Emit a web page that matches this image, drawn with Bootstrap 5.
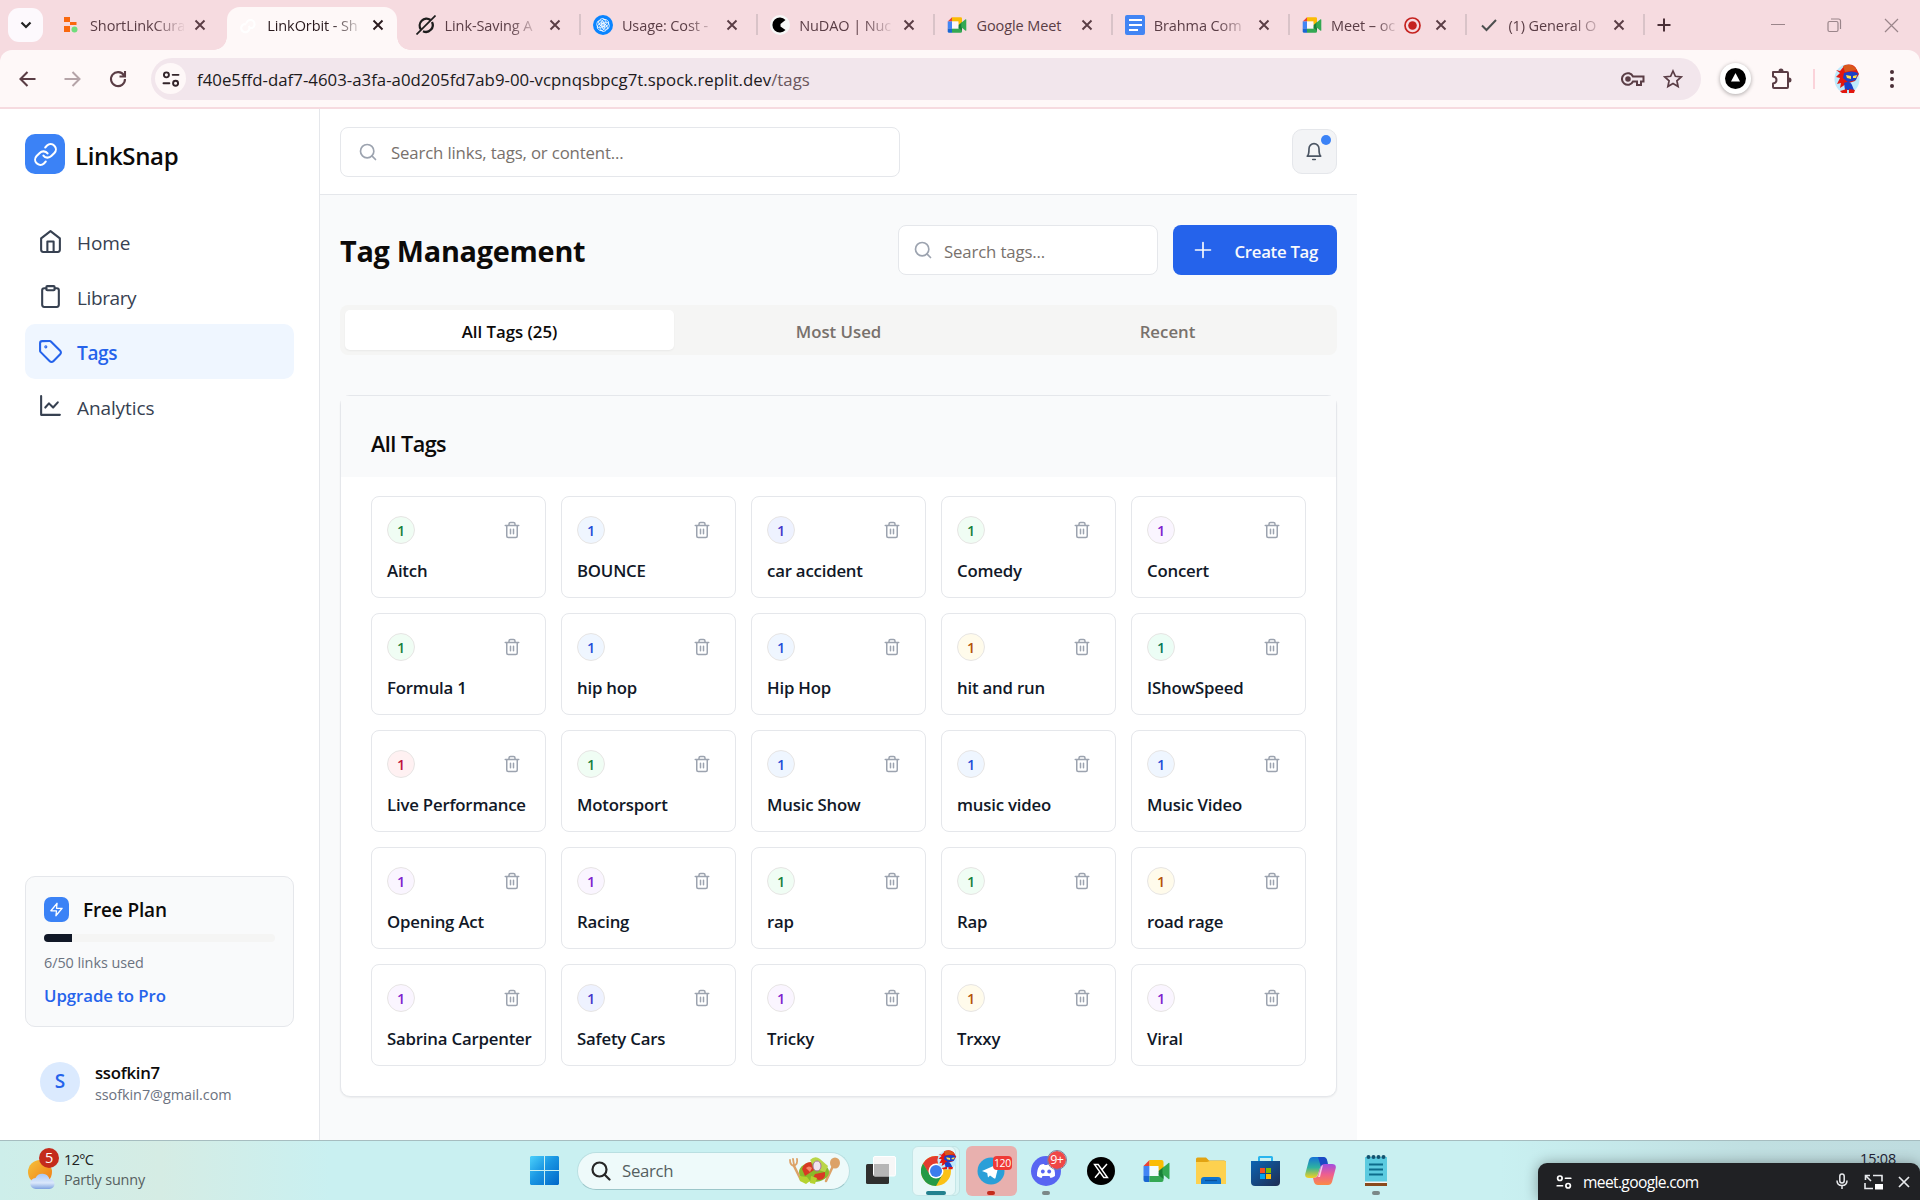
<!DOCTYPE html>
<html lang="en">
<head>
<meta charset="utf-8">
<meta name="viewport" content="width=device-width, initial-scale=1">
<title>LinkOrbit - Tags</title>
<link href="https://cdn.jsdelivr.net/npm/bootstrap@5.3.0/dist/css/bootstrap.min.css" rel="stylesheet">
<style>
:root{--ui:"Open Sans","Noto Sans",sans-serif;--line:#e5e7eb;--blue:#2563eb;--md:550}
html,body{height:1200px;overflow:hidden}
body{font-family:var(--ui);font-size:16.8px;line-height:25px;letter-spacing:-.15px;color:#0c0a09;background:#fff;display:flex;flex-direction:column}
svg{display:block;flex:none}
.ico{fill:none;stroke:currentColor;stroke-width:2;stroke-linecap:round;stroke-linejoin:round}
/* browser chrome */
.tabstrip{height:50px;background:#f6dbe0;color:#5a3d45;font-size:14.5px;padding-left:8px;flex:none;letter-spacing:-.1px}
.tabmenu{width:35px;height:34px;border-radius:11px;background:#fdf9fd;color:#222}
.btab{width:177.3px;height:50px;padding:0 17px 0 14px;position:relative}
.btab .favi{width:20px;height:20px;margin-right:9px}
.btab .ttl{flex:1;min-width:0;line-height:24px;padding-top:1px;-webkit-mask-image:linear-gradient(90deg,#000 68%,transparent 102%);mask-image:linear-gradient(90deg,#000 68%,transparent 102%)}
.btab .ttl.full{-webkit-mask-image:none;mask-image:none}
.btab .cls{margin-left:9px}
.btab.sep::after{content:"";position:absolute;right:-2px;top:14px;width:2px;height:21px;background:#d9c3c8}
.btab.on{color:#2a1a1e}
.btab.on::before{content:"";position:absolute;left:3px;right:5px;top:7px;bottom:0;background:#fef8f8;border-radius:13px 13px 0 0}
.btab.on>*{position:relative}
.flare{position:absolute!important;bottom:0;width:13px;height:13px}
.flare.l{left:-10px;background:radial-gradient(circle at 0 0,transparent 12.5px,#fef8f8 13px)}
.flare.r{right:-8px;background:radial-gradient(circle at 100% 0,transparent 12.5px,#fef8f8 13px)}
.toolbar{height:59px;background:#f6dbe0;flex:none}
.toolbar-in{height:57px;background:#fef8f8;border-radius:12px 12px 0 0;color:#5a3d45;padding-left:15px}
.omni{width:1550px;height:42px;border-radius:21px;background:#f2e6ec;padding:0 18px 0 4px}
.siteinfo{width:31px;height:31px;border-radius:50%;background:#fef8f8;color:#33242a}
.url{color:#201a1c;font-size:16.8px;letter-spacing:.02px;padding-top:1px}
.extdot{width:31px;height:31px;border-radius:50%;background:#fff;box-shadow:0 1px 4px #0005}
/* application */
.app{height:1031px;flex:none}
.side{width:320px;border-right:1px solid var(--line);padding:25px 25px 0}
.logo-sq{width:40px;height:40px;border-radius:10px;background:#3b82f6;color:#fff}
.brand{font-size:24px;font-weight:var(--md);line-height:32px;letter-spacing:-.35px}
.snav{margin-top:40px}
.snav a{height:55px;padding:0 15px 0 13px;border-radius:10px;color:#374151;font-size:19px;text-decoration:none;gap:14px;letter-spacing:-.1px}
.snav a.active{background:#eff6ff;color:var(--blue);font-weight:var(--md)}
.snav a span{padding-top:3px}
.snav a svg{margin-top:-1px}
.plan{height:151px;border:1px solid var(--line);border-radius:10px;background:#f9fafb;padding:20px 18px 0;margin-top:auto}
.bolt{width:25px;height:25px;border-radius:7px;background:#3b82f6;color:#fff}
.pbar{height:8px;border-radius:5px;background:#f5f5f4;margin-top:12px}
.pbar .progress-bar{background:#111827}
.mut{color:#6b7280;font-size:14.4px;letter-spacing:-.05px}
.avatar{width:40px;height:40px;border-radius:50%;background:#dbeafe;color:var(--blue);font-weight:var(--md);font-size:19px}
.mainc{width:1037px;background:#f9fafb}
.topb{height:86px;background:#fff;border-bottom:1px solid var(--line);padding:0 20px}
.fld{height:50px;border:1px solid var(--line);border-radius:8px;background:#fff;color:#78716c}
.fld span{padding-top:2px}
.fld svg{color:#9ca3af}
.bell{width:45px;height:45px;border:1px solid var(--line);border-radius:10px;background:#f3f4f6;color:#4b5563;position:relative}
.bell i{position:absolute;right:5px;top:5px;width:10px;height:10px;border-radius:50%;background:#3b82f6}
h1.ttl1{font-size:28.8px;font-weight:700;margin:0;line-height:40px;padding-top:1px;letter-spacing:-.24px}
.mk{width:164px;height:50px;border-radius:8px;background:var(--blue);color:#f8fafc;font-weight:var(--md);border:0;padding:3px 19px 0 20px;font-size:16.8px;letter-spacing:-.3px}
.tabs{height:50px;background:#f5f5f4;border-radius:8px;padding:5px;color:#78716c;font-weight:var(--md);margin-top:30px;letter-spacing:0}
.tabs div{border-radius:5px;padding-top:2px}
.tabs .cur{background:#fff;color:#0c0a09;box-shadow:0 1px 2px #0000000d}
.panel{width:997px;height:702px;margin:40px 0 0;background:#fff;border:1px solid var(--line);border-radius:10px;box-shadow:0 1px 2px #0000000f}
.panel-h{height:81px;background:#f9fafb;padding:35px 30px 0;font-size:21.6px;font-weight:var(--md);letter-spacing:-.5px}
.grid5{display:grid;grid-template-columns:repeat(5,175px);gap:15px;padding:19px 0 0 30px}
.tagc{height:102px;border:1px solid var(--line);border-radius:8px;padding:19px 15px 0;color:#111827;font-weight:var(--md);background:#fff}
.cnt{width:28px;height:28px;border-radius:50%;border:1px solid #e7e5e4;font-size:14.4px;font-weight:var(--md);padding-top:1px}
.tagc svg{color:#9ca3af;margin-right:9px}
.tagn{margin-top:14px;line-height:25px;width:150px;letter-spacing:-.2px}
.c-g{background:#f0fdf4;color:#15803d}.c-b{background:#eff6ff;color:#1d4ed8}.c-i{background:#eef2ff;color:#4338ca}
.c-p{background:#faf5ff;color:#7e22ce}.c-y{background:#fffbeb;color:#b45309}.c-e{background:#ecfdf5;color:#047857}
.c-r{background:#fff1f2;color:#be123c}
/* desktop taskbar */
.tbar{height:60px;flex:none;border-top:1px solid #a6bdc0;background:linear-gradient(90deg,#cdeeea 0,#d5ece4 160px,#c9f0f1 330px,#c9f0f1 1500px,#c0dfe1 1750px,#bfdcdf);position:relative}
.tsearch{width:273px;height:38px;border-radius:19px;background:#eefafa;border:1px solid #b9dfe1;border-bottom-color:#9cc6c9;color:#555f60;font-size:16.8px;letter-spacing:-.3px;padding:0 8px 0 13px}
.slot{width:54.9px;height:50px;position:relative}
.slot .tile{position:absolute;inset:0 2px;border-radius:6px}
.slot>svg{position:relative}
.slot .run{position:absolute;bottom:1px;height:4px;width:8px;border-radius:2px;background:#7b8888}
.bdg{position:absolute;color:#fff;text-align:center}
.pip{position:absolute;right:0;bottom:0;width:382px;height:37px;background:#202124;color:#fff;border-radius:9px 9px 0 0;padding:0 9px 0 17px;font-size:15.6px;letter-spacing:-.65px;box-shadow:0 0 14px #0005}
</style>
</head>
<body>
<svg width="0" height="0" style="display:none">
<symbol id="x" viewBox="0 0 14 14"><path d="M2.5 2.5l9 9M11.5 2.5l-9 9" fill="none" stroke="currentColor" stroke-width="1.9"/></symbol>
<symbol id="lens" viewBox="0 0 24 24"><circle cx="11" cy="11" r="8"/><path d="m21 21-4.3-4.3"/></symbol>
<symbol id="trash" viewBox="0 0 24 24"><path d="M3 6h18M19 6v14c0 1-1 2-2 2H7c-1 0-2-1-2-2V6M8 6V4c0-1 1-2 2-2h4c1 0 2 1 2 2v2M10 11v6M14 11v6"/></symbol>
<symbol id="meet" viewBox="0 0 28 24"><path d="M1 7 7 1v6z" fill="#ea4335"/><path d="M7 1h12q2 0 2 2v6h-5V7H7z" fill="#fbbc04"/><path d="M1 7h6v10H1z" fill="#4285f4"/><path d="M1 17h6v6H3q-2 0-2-2z" fill="#1967d2"/><path d="M7 17h9v-3h5v7q0 2-2 2H7z" fill="#34a853"/><path d="M16 7h5v2l-5 4z" fill="#fbbc04"/><path d="m16 12 5-4v12l-5-4z" fill="#188038"/><path d="m20 9 6-5q1-.5 1 .7v14.600q0 1.200-1 .7l-6-5z" fill="#34a853"/><path d="M7 7h9v10H7z" fill="#fff" fill-opacity=".75"/></symbol>
<symbol id="tune" viewBox="0 0 24 24"><g fill="none" stroke="currentColor" stroke-width="2.300" stroke-linecap="round"><circle cx="6.500" cy="7" r="3"/><path d="M14 7h7M3 17h7"/><circle cx="17.500" cy="17" r="3"/></g></symbol>
<symbol id="hero" viewBox="0 0 26 30"><ellipse cx="13" cy="15" rx="12.500" ry="14.500" fill="#bfe9fb"/><path d="M2 6l4 1 5-6q9-2 12 5l2 4-4 7-9 3-6 4 1-5-4 1 3-6-4-1 4-4z" fill="#e3170f"/><path d="M9 2q9-4 14 4l-12 2z" fill="#d9581b"/><path d="M10 9q8-3 14 0l-2 7-8 2-5-4z" fill="#1b40c8"/><path d="M12 11l5 1v3l-4-1zM19 12l4-1-1 3h-3z" fill="#ffe24a"/><path d="M10 19q6-3 8 2l2 5h-9z" fill="#1b40c8"/><path d="M6 27l7-2v4H8zM15 25l6 1-1 3h-5z" fill="#e3170f"/></symbol>
</svg>

<header class="tabstrip d-flex align-items-center">
  <div class="tabmenu d-flex align-items-center justify-content-center"><svg width="14" height="14" viewBox="0 0 14 14" fill="none" stroke="currentColor" stroke-width="2.200"><path d="m2.500 4.500 4.500 4.500 4.500-4.500"/></svg></div>
  <nav class="d-flex" id="tabs" style="margin-left:4px"></nav>
  <svg width="16" height="16" viewBox="0 0 16 16" stroke="#4a2f37" stroke-width="2" style="margin-left:13px"><path d="M8 1.500v13M1.500 8h13"/></svg>
  <div class="d-flex align-items-center ms-auto" style="color:#9a858a;gap:42px;padding-right:21px">
    <svg width="14" height="14" viewBox="0 0 14 14" stroke="currentColor"><path d="M0 6.500h14"/></svg>
    <svg width="15" height="15" viewBox="0 0 15 15" fill="none" stroke="currentColor" stroke-width="1.200"><rect x="1" y="3.500" width="10" height="10" rx="1.500"/><path d="M4 1h7.500q2 0 2 2v8"/></svg>
    <svg width="15" height="15" viewBox="0 0 15 15" stroke="currentColor" stroke-width="1.200"><path d="M1 1l13 13M14 1 1 14"/></svg>
  </div>
</header>
<div class="toolbar"><div class="toolbar-in d-flex align-items-center">
  <svg width="26" height="26" viewBox="0 0 26 26" fill="none" stroke="currentColor" stroke-width="2.100"><path d="M20.500 13H6M12.500 6 5.500 13l7 7"/></svg>
  <svg width="26" height="26" viewBox="0 0 26 26" fill="none" stroke="#b5a4a8" stroke-width="2" style="margin-left:18px"><path d="M5.500 13H20M13.500 6l7 7-7 7"/></svg>
  <svg width="26" height="26" viewBox="0 0 26 26" fill="none" stroke="currentColor" stroke-width="2.100" style="margin:0 20px"><path d="M19 9.500A7 7 0 1 0 20 13M20 5v5.500h-5.500"/></svg>
  <div class="omni d-flex align-items-center">
    <div class="siteinfo d-flex align-items-center justify-content-center"><svg width="20" height="20"><use href="#tune"/></svg></div>
    <div class="url text-nowrap" style="margin-left:11px"><span>f40e5ffd-daf7-4603-a3fa-a0d205fd7ab9-00-vcpnqsbpcg7t.spock.replit.dev</span><span style="color:#6a565c">/tags</span></div>
    <svg class="ms-auto" width="24" height="16" viewBox="0 0 24 16" fill="none" stroke="#5a3d45" stroke-width="2"><path d="M12 5.500a5.800 5.800 0 1 0 0 5h4v3.500h4v-3.500h2.500v-5z"/><circle cx="7" cy="8" r="1.800" fill="#5a3d45"/></svg>
    <svg width="20" height="20" viewBox="0 0 20 20" fill="none" stroke="#5a3d45" stroke-width="1.700" style="margin-left:18px"><path d="m10 2 2.400 5.300 5.800.6-4.300 3.900 1.200 5.700-5.100-2.900-5.100 2.900 1.200-5.700L1.800 7.900l5.800-.6z"/></svg>
  </div>
  <div class="extdot d-flex align-items-center justify-content-center" style="margin-left:19px"><svg width="21" height="21" viewBox="0 0 21 21"><circle cx="10.500" cy="10.500" r="10.500"/><path d="m10.500 5 4.500 8.500H6z" fill="#fff"/></svg></div>
  <svg width="24" height="24" viewBox="0 0 24 24" fill="none" stroke="currentColor" stroke-width="2" stroke-linejoin="round" style="margin-left:18px"><path d="M4 5h14q1 0 1 1v14q0 1-1 1H5q-1 0-1-1v-3.500q3.500-.5 3.500-3.500T4 9.500z"/><path d="M9.500 4a2.500 2.500 0 0 1 5 0zM20 10.500a2.500 2.500 0 0 1 0 5z" fill="currentColor" stroke="none"/></svg>
  <div style="width:2px;height:20px;background:#fbd3da;margin:0 20px"></div>
  <svg width="26" height="30" style="margin-left:-1px"><use href="#hero"/></svg>
  <svg width="6" height="20" viewBox="0 0 6 20" fill="#4a2f37" style="margin-left:29px"><circle cx="3" cy="3" r="2"/><circle cx="3" cy="10" r="2"/><circle cx="3" cy="17" r="2"/></svg>
</div></div>

<div class="app d-flex">
  <aside class="side d-flex flex-column">
    <div class="d-flex align-items-center" style="gap:10px">
      <div class="logo-sq d-flex align-items-center justify-content-center"><svg class="ico" width="25" height="25" viewBox="0 0 24 24"><path d="M10 13a5 5 0 0 0 7.540.54l3-3a5 5 0 0 0-7.070-7.070l-1.720 1.710"/><path d="M14 11a5 5 0 0 0-7.540-.54l-3 3a5 5 0 0 0 7.070 7.070l1.710-1.710"/></svg></div>
      <div class="brand" style="padding-top:4px">LinkSnap</div>
    </div>
    <nav class="snav">
      <a class="d-flex align-items-center" href="#"><svg class="ico" width="25" height="25" viewBox="0 0 24 24"><path d="m3 9 9-7 9 7v11a2 2 0 0 1-2 2H5a2 2 0 0 1-2-2z"/><path d="M9 22V12h6v10"/></svg><span>Home</span></a>
      <a class="d-flex align-items-center" href="#"><svg class="ico" width="25" height="25" viewBox="0 0 24 24"><rect x="8" y="2" width="8" height="4" rx="1"/><path d="M16 4h2a2 2 0 0 1 2 2v14a2 2 0 0 1-2 2H6a2 2 0 0 1-2-2V6a2 2 0 0 1 2-2h2"/></svg><span style="letter-spacing:-.4px">Library</span></a>
      <a class="d-flex align-items-center active" href="#"><svg class="ico" width="25" height="25" viewBox="0 0 24 24"><path d="M12.600 2.600A2 2 0 0 0 11.200 2H4a2 2 0 0 0-2 2v7.200a2 2 0 0 0 .6 1.400l8.700 8.700a2.400 2.400 0 0 0 3.400 0l6.600-6.600a2.400 2.400 0 0 0 0-3.400z"/><circle cx="7.500" cy="7.500" r=".5" fill="currentColor"/></svg><span style="letter-spacing:-.35px">Tags</span></a>
      <a class="d-flex align-items-center" href="#"><svg class="ico" width="25" height="25" viewBox="0 0 24 24"><path d="M3 2v18h18M7 13l3.500-4 4 4L19 8"/></svg><span>Analytics</span></a>
    </nav>
    <div class="plan">
      <div class="d-flex align-items-center" style="gap:14px"><div class="bolt d-flex align-items-center justify-content-center"><svg class="ico" width="15" height="15" viewBox="0 0 24 24"><path d="M13 2 3 14h9l-1 8 10-12h-9z"/></svg></div><div style="font-size:19px;font-weight:var(--md);line-height:23px;padding-top:2px">Free Plan</div></div>
      <div class="progress pbar"><div class="progress-bar" style="width:12%"></div></div>
      <div class="mut" style="margin-top:8px">6/50 links used</div>
      <div style="margin-top:8px;font-weight:var(--md);letter-spacing:-.05px;color:var(--blue)">Upgrade to Pro</div>
    </div>
    <div class="d-flex align-items-center" style="padding:31px 15px 35px;gap:15px">
      <div class="avatar d-flex align-items-center justify-content-center">S</div>
      <div style="line-height:21px;padding-top:4px"><div style="font-weight:var(--md);letter-spacing:-.3px">ssofkin7</div><div class="mut" style="padding-top:1px">ssofkin7@gmail.com</div></div>
    </div>
  </aside>
  <main class="mainc">
    <div class="topb d-flex align-items-center justify-content-between">
      <div class="fld d-flex align-items-center" style="width:560px;padding-left:17px;gap:13px"><svg class="ico" width="20" height="20"><use href="#lens"/></svg><span>Search links, tags, or content...</span></div>
      <div class="bell d-flex align-items-center justify-content-center"><svg class="ico" width="20" height="22" viewBox="0 0 24 24" style="margin-right:1px"><path d="M6 8a6 6 0 0 1 12 0c0 7 2 9 2 9H4s2-2 2-9M10.500 21h3"/></svg><i></i></div>
    </div>
    <div style="padding:30px 20px 0">
      <div class="d-flex align-items-center">
        <h1 class="ttl1">Tag Management</h1>
        <div class="fld d-flex align-items-center ms-auto" style="width:260px;padding-left:14px;gap:11px"><svg class="ico" width="20" height="20"><use href="#lens"/></svg><span>Search tags...</span></div>
        <button class="mk d-flex align-items-center justify-content-between" style="margin-left:15px"><svg class="ico" width="20" height="20" viewBox="0 0 24 24" style="margin-top:-3px"><path d="M12 3v18M3 12h18"/></svg><span class="text-nowrap">Create Tag</span></button>
      </div>
      <div class="tabs d-flex"><div class="cur flex-fill w-100 d-flex align-items-center justify-content-center">All Tags (25)</div><div class="flex-fill w-100 d-flex align-items-center justify-content-center">Most Used</div><div class="flex-fill w-100 d-flex align-items-center justify-content-center">Recent</div></div>
      <section class="panel">
        <div class="panel-h">All Tags</div>
        <div class="grid5" id="tags"></div>
      </section>
    </div>
  </main>
</div>

<footer class="tbar">
  <div class="d-flex align-items-center h-100">
    <div class="d-flex align-items-center" style="padding-left:27px;width:530px">
      <svg width="34" height="46" viewBox="0 0 34 46"><defs><linearGradient id="sun" x2="1" y2="1"><stop stop-color="#f5c23a"/><stop offset="1" stop-color="#f07a13"/></linearGradient><linearGradient id="cl" x2="0" y2="1"><stop stop-color="#a8c6f5"/><stop offset=".6" stop-color="#dbe8fb"/><stop offset="1" stop-color="#7fa3e0"/></linearGradient></defs><circle cx="13" cy="24" r="12" fill="url(#sun)"/><path d="M9 41a5.500 5.500 0 0 1-.5-11 7.500 7.500 0 0 1 14 1 5 5 0 0 1 0 10z" fill="url(#cl)"/><circle cx="22" cy="10" r="10" fill="#c42b1c"/><text x="22" y="15" font-size="14.500" fill="#fff" text-anchor="middle">5</text></svg>
      <div style="line-height:20px;font-size:14.400px;margin-left:3px;padding-bottom:1px"><div style="color:#222;letter-spacing:-.6px">12°C</div><div style="color:#56605f">Partly sunny</div></div>
    </div>
    <svg width="29" height="29" viewBox="0 0 29 29"><defs><linearGradient id="win" x2="1" y2="1"><stop stop-color="#4cd0fb"/><stop offset=".45" stop-color="#1a97e3"/><stop offset="1" stop-color="#0067c8"/></linearGradient></defs><path d="M1 0h13v14H0V1zM15 0h13l1 1v13H15zM0 15h14v14H1l-1-1zM15 15h14v13l-1 1H15z" fill="url(#win)"/></svg>
    <div class="tsearch d-flex align-items-center" style="margin-left:18px">
      <svg width="20" height="20" viewBox="0 0 20 20" fill="none" stroke="#262626" stroke-width="2.200" stroke-linecap="round"><circle cx="8.500" cy="8.500" r="7"/><path d="m13.500 13.500 5 5"/></svg><span style="margin-left:11px">Search</span>
      <svg class="ms-auto" width="53" height="30" viewBox="0 0 53 30"><g stroke="#dca268" fill="none" stroke-linecap="round"><path d="m6 10 7 14" stroke-width="2.500"/><path d="M2 4q0 5 4 6 4-2 3-7M5 3l1 6" stroke-width="1.800"/><path d="m45 10-7 15" stroke-width="2.500"/></g><ellipse cx="47" cy="7" rx="5" ry="5.500" fill="#dca268"/><ellipse cx="26" cy="16" rx="15" ry="10" fill="#8aba2a"/><path d="M14 13q2-7 9-7l3 8-9 6zM27 18l10-2q1 8-6 8l-6-2z" fill="#d83a24"/><path d="M18 12q3-3 6 0l-2 4z" fill="#f5896a"/><path d="M22 4q5-5 10-1l8 7-3 6-9-3z" fill="#b9d648"/><ellipse cx="29" cy="10" rx="4" ry="5" fill="#f0e3ef" stroke="#a874a0"/><path d="m11 20 8 1 3 4-4 3-6-3zM23 20l6 2-2 6-5-1z" fill="#b5d32f"/></svg>
    </div>
    <svg width="30" height="29" viewBox="0 0 30 29" style="margin:0 13px 0 16px"><rect y="8" width="23" height="20" rx="1.500" fill="#2f2f2e"/><rect x="7.500" y=".5" width="22" height="19.500" rx="1.500" fill="#f7f7f7" stroke="#fff"/><path d="M8 8h15v12H8z" fill="#b6b6b6"/></svg>
    <div class="slot d-flex align-items-center justify-content-center"><div class="tile" style="background:#d9f4f4;border:1px solid #c0e3e4;left:6px;right:4px"></div><div class="tile" style="background:#e7f8f8;border:1px solid #c4e6e7;left:3px;right:8px"></div>
      <svg width="36" height="38" viewBox="0 0 36 38" style="margin:-4px 0 0 6px"><circle cx="15" cy="21" r="15" fill="#fbc116"/><path d="M2 13.500A15 15 0 0 1 28 13.500L15 13.500 8.500 25z" fill="#e33b2e"/><path d="M2 13.500A15 15 0 0 0 15 36l6.500-11.500L9 25z" fill="#249a46"/><circle cx="15" cy="21" r="7.500" fill="#fff"/><circle cx="15" cy="21" r="6" fill="#3b7ded"/><svg x="16" y="0" width="20" height="20" viewBox="0 0 26 30" preserveAspectRatio="none"><use href="#hero"/></svg></svg><span class="run" style="width:20px;background:#22818f;left:17px"></span></div>
    <div class="slot d-flex align-items-center justify-content-center"><div class="tile" style="background:#e8b0ae"></div><svg width="28" height="28" viewBox="0 0 28 28"><circle cx="14" cy="14" r="13.500" fill="#2a9fd8"/><path d="m5 14 16-7q1 0 .5 2l-3 12q-.5 1-2 0l-3.500-2.500-2 2-.8-4.500z" fill="#fff"/></svg><span class="bdg" style="left:29px;top:10px;width:19px;height:14px;border-radius:4px;background:#f03a36;font-size:10.500px;line-height:14px;letter-spacing:-.4px">120</span><span class="run" style="background:#c42b1c"></span></div>
    <div class="slot d-flex align-items-center justify-content-center"><svg width="30" height="30" viewBox="0 0 30 30"><circle cx="15" cy="15" r="15" fill="#5865f2"/><path d="M9 9q2-1 4-1l.6 1h2.800l.6-1q2 0 4 1 3.500 5 3 11-2 1.500-4.500 2L18.500 20h-7l-1 2Q8 21.500 6 20q-.5-6 3-11z" fill="#fff"/><circle cx="11.800" cy="15.500" r="1.900" fill="#5865f2"/><circle cx="18.200" cy="15.500" r="1.900" fill="#5865f2"/></svg><span class="bdg" style="left:29px;top:5px;width:18px;height:18px;border-radius:9px;background:#f04747;font-size:12.500px;line-height:17px;letter-spacing:-.5px;outline:1px solid #7e7e9a">9+</span><span class="run"></span></div>
    <div class="slot d-flex align-items-center justify-content-center"><svg width="28" height="28" viewBox="0 0 28 28"><circle cx="14" cy="14" r="14"/><path d="M7.500 7.500h3.700l9.300 13h-3.700z" fill="none" stroke="#fff" stroke-width="1.400"/><path d="m20 7-5.300 6M12.800 15 8 20.800" stroke="#fff" stroke-width="1.500"/></svg></div>
    <div class="slot d-flex align-items-center justify-content-center"><svg width="29" height="24"><use href="#meet"/></svg></div>
    <div class="slot d-flex align-items-center justify-content-center"><svg width="30" height="27" viewBox="0 0 30 27"><path d="M0 2q0-1.500 1.500-1.500H10l3 3h15q2 0 2 2V8H0z" fill="#e2a312"/><path d="M0 5h11l3-1h14.500q1.500 0 1.500 1.500V27H0z" fill="#fdd14f"/><path d="M5 27v-4q0-3 3-3h14q3 0 3 3v4z" fill="#0f74cf"/><path d="M9 23.500h12" stroke="#0a4f97" stroke-width="1.300"/></svg></div>
    <div class="slot d-flex align-items-center justify-content-center"><svg width="29" height="31" viewBox="0 0 29 31"><defs><linearGradient id="st" x2="1" y2="1"><stop stop-color="#0b64b4"/><stop offset="1" stop-color="#1f2d52"/></linearGradient></defs><path d="M8 7V2.500Q8 2 8.500 2h12q.5 0 .5.500V7" fill="none" stroke="#29b5ee" stroke-width="2"/><path d="M0 6h29v21q0 4-4 4H4q-4 0-4-4z" fill="url(#st)"/><path d="M9 13h5v5H9z" fill="#f25022"/><path d="M15 13h5v5h-5z" fill="#7fba00"/><path d="M9 19h5v5H9z" fill="#00a4ef"/><path d="M15 19h5v5h-5z" fill="#ffb900"/></svg></div>
    <div class="slot d-flex align-items-center justify-content-center"><svg width="31" height="28" viewBox="0 0 31 28"><defs><linearGradient id="c1" x2="0" y2="1"><stop stop-color="#1673d6"/><stop offset=".5" stop-color="#2fb2a0"/><stop offset="1" stop-color="#f6d21e"/></linearGradient><linearGradient id="c2" x2="0" y2="1"><stop stop-color="#a24de0"/><stop offset=".5" stop-color="#ee5f8f"/><stop offset="1" stop-color="#fb8b45"/></linearGradient></defs><path d="M8 0h10q3 0 4 3l1 5h-4q-3 0-4 3l-2 6q-1 4-5 4H4q-5 0-3.500-5L4 3q1-3 4-3z" fill="url(#c1)"/><path d="M13 0h5q3 0 4 3l1 5h-4q-2 0-3 2z" fill="#1b49c5"/><path d="M23 28H13q-3 0-4-3l-1-4q4 0 5-3l2-7q1-4 5-4h7q5 0 3.500 5L27 25q-1 3-4 3z" fill="url(#c2)"/><path d="m13 20 3-10q1-2 2-2l-3 12z" fill="#fff" opacity=".7"/></svg></div>
    <div class="slot d-flex align-items-center justify-content-center"><svg width="22" height="31" viewBox="0 0 22 31"><path d="M0 2h22v26H0z" fill="#5ccbe0"/><path d="M0 28h22v3H0z" fill="#8a4a1c"/><path d="M0 26.500h22V28H0z" fill="#f3f3f3"/><path d="M4 9.500h14M4 14.500h14M4 19.500h14" stroke="#0d6c8c" stroke-width="1.800"/><g fill="#13536f"><circle cx="3.500" cy="2" r="2"/><circle cx="8.500" cy="2" r="2"/><circle cx="13.500" cy="2" r="2"/><circle cx="18.500" cy="2" r="2"/></g></svg><span class="run"></span></div>
    <div class="ms-auto align-self-start" style="padding:8px 24px 0 0;line-height:20px;font-size:14.400px;color:#223">15:08</div>
  </div>
  <div class="pip d-flex align-items-center">
    <svg width="18" height="18"><use href="#tune"/></svg><span style="margin-left:10px;padding-top:1px">meet.google.com</span>
    <svg class="ms-auto" width="12" height="17" viewBox="0 0 12 17" fill="none" stroke="#e8eaed" stroke-width="1.500"><rect x="3.800" y="1" width="4.400" height="9" rx="2.200"/><path d="M1 7.500q0 5 5 5t5-5M6 12.500V16"/></svg>
    <svg width="19" height="16" viewBox="0 0 19 16" fill="none" stroke="#e8eaed" stroke-width="1.600" style="margin:0 14px 0 16px"><path d="M9 1.500h9v6M1 9v5.500h8M2 2l5 5M1.500 6V1.500H6"/><path d="M11 10h8v5.500h-8z" fill="#fff" stroke="none"/></svg>
    <svg width="14" height="14" viewBox="0 0 14 14" stroke="#e8eaed" stroke-width="1.700"><path d="m2 2 10 10M12 2 2 12"/></svg>
  </div>
</footer>

<script src="https://cdn.jsdelivr.net/npm/bootstrap@5.3.0/dist/js/bootstrap.bundle.min.js"></script>
<script>
const favicons={
 short:'<svg width="20" height="20" viewBox="0 0 20 20"><path d="M3 2h6v5H3zM9 7h6.500v3H9zM3 11h6v6H3z" fill="#f9680f"/><circle cx="13.500" cy="14.500" r="3" fill="#6fdd7c"/></svg>',
 orbit:'<svg width="20" height="20" viewBox="0 0 24 24" fill="none" stroke="#fff" stroke-width="2.500"><path d="M10 10a5 5 0 1 1 5 6l-2 0M13 13a5 5 0 1 1-6-2l3 0"/></svg>',
 zero:'<svg width="20" height="20" viewBox="0 0 20 20" fill="none" stroke="#1d1d1d" stroke-width="2.300"><path d="M14.500 5A6.800 6.800 0 0 0 5 14.500M7 16.200A6.800 6.800 0 0 0 16 7"/><path d="M0.500 19.500 19.500.5" stroke-width="1.700"/></svg>',
 gpt:'<svg width="20" height="20" viewBox="0 0 20 20"><circle cx="10" cy="10" r="10" fill="#0a84ff"/><g fill="none" stroke="#fff" stroke-width=".8"><rect x="7.200" y="3.800" width="7" height="7.500" rx="3" id="k" transform="rotate(30 10 10)"/><use href="#k" transform="rotate(60 10 10)"/><use href="#k" transform="rotate(120 10 10)"/><use href="#k" transform="rotate(180 10 10)"/><use href="#k" transform="rotate(240 10 10)"/><use href="#k" transform="rotate(300 10 10)"/></g></svg>',
 nu:'<svg width="20" height="20" viewBox="0 0 20 20"><circle cx="10" cy="10" r="10" fill="#f7f7f7"/><path d="M15.500 5A7.500 7.500 0 1 0 15.500 15L10.500 11.500V9z" fill="#000"/></svg>',
 meet:'<svg width="20" height="18"><use href="#meet"/></svg>',
 docs:'<svg width="20" height="20" viewBox="0 0 20 20"><rect width="20" height="20" rx="2" fill="#4285f4"/><path d="M4 5h13M4 10h13M4 15h9" stroke="#fff" stroke-width="1.900"/></svg>',
 check:'<svg width="20" height="20" viewBox="0 0 20 20" fill="none" stroke="#4c4f4f" stroke-width="2"><path d="m3 10.500 4.500 4.500L17 5"/></svg>'};
const rec='<svg width="17" height="17" viewBox="0 0 17 17" style="margin:0 4px 0 6px"><circle cx="8.500" cy="8.500" r="7.500" fill="none" stroke="#c5221f" stroke-width="1.700"/><circle cx="8.500" cy="8.500" r="4.300" fill="#c5221f"/></svg>';
[['short','ShortLinkCura',''],['orbit','LinkOrbit - Sh','on'],['zero','Link-Saving A','sep'],['gpt','Usage: Cost -','sep'],['nu','NuDAO | Nuc','sep'],['meet','Google Meet','sep'],['docs','Brahma Com','sep'],['meet','Meet – oc','sep',rec],['check','(1) General O','sep']].forEach(([i,t,c,r])=>{
 document.getElementById('tabs').insertAdjacentHTML('beforeend',`<div class="btab d-flex align-items-center ${c}">${c==='on'?'<span class="flare l"></span><span class="flare r"></span>':''}<div class="favi d-flex align-items-center justify-content-center">${favicons[i]}</div><div class="ttl text-nowrap ${i==='meet'&&!r?'full':''}">${t}</div>${r||''}<svg class="cls" width="14" height="14"><use href="#x"/></svg></div>`)});
const tags=[['Aitch','g'],['BOUNCE','b'],['car accident','i'],['Comedy','g'],['Concert','p'],['Formula 1','g'],['hip hop','b'],['Hip Hop','b'],['hit and run','y'],['IShowSpeed','e'],['Live Performance','r'],['Motorsport','g'],['Music Show','b'],['music video','b'],['Music Video','b'],['Opening Act','p'],['Racing','p'],['rap','g'],['Rap','g'],['road rage','y'],['Sabrina Carpenter','p'],['Safety Cars','i'],['Tricky','p'],['Trxxy','y'],['Viral','p']];
document.getElementById('tags').innerHTML=tags.map(([n,c])=>`<div class="tagc"><div class="d-flex align-items-center justify-content-between"><div class="cnt c-${c} d-flex align-items-center justify-content-center">1</div><svg class="ico" width="18" height="18"><use href="#trash"/></svg></div><div class="tagn text-nowrap">${n}</div></div>`).join('');
</script>
</body>
</html>
